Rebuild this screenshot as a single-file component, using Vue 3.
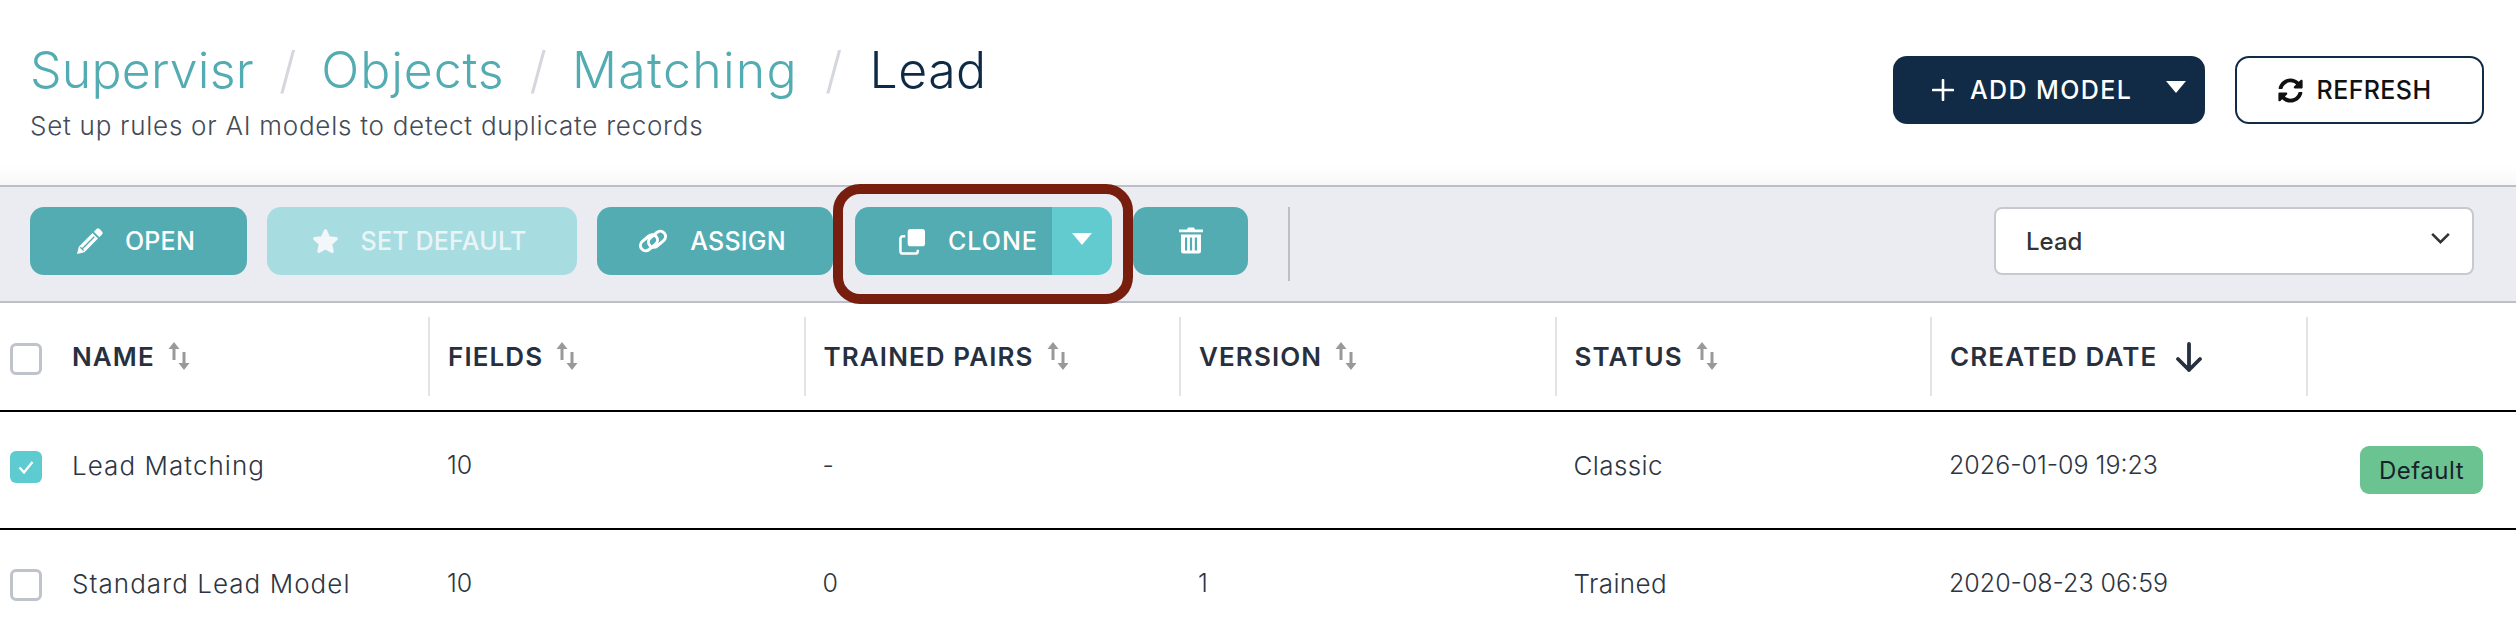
<script setup>
const columns = [
  { label: 'NAME', sort: true },
  { label: 'FIELDS', sort: true },
  { label: 'TRAINED PAIRS', sort: true },
  { label: 'VERSION', sort: true },
  { label: 'STATUS', sort: true },
  { label: 'CREATED DATE', sort: false },
  { label: '', sort: null }
]
const rows = [
  { checked: true, cells: ['Lead Matching', '10', '-', '', 'Classic', '2026-01-09 19:23'], badge: true },
  { checked: false, cells: ['Standard Lead Model', '10', '0', '1', 'Trained', '2020-08-23 06:59'], badge: false }
]
</script>

<template>
  <div class="page">
    <header class="head">
      <div class="titles">
        <div class="crumbs">
          <span class="link c1">Supervisr</span><span class="sep">/</span>
          <span class="link c2">Objects</span><span class="sep">/</span>
          <span class="link c3">Matching</span><span class="sep wide">/</span>
          <span class="cur">Lead</span>
        </div>
        <div class="sub">Set up rules or AI models to detect duplicate records</div>
      </div>
      <div class="head-actions">
        <button class="btn navy">
          <svg class="plus" viewBox="0 0 22 22"><path d="M11 1v20M1 11h20" stroke="#fff" stroke-width="2.6" stroke-linecap="round" fill="none"/></svg>
          <span>ADD MODEL</span>
          <span class="tri white-tri"></span>
        </button>
        <button class="btn outline">
          <svg class="ic-refresh" viewBox="0 0 512 512"><path fill="#111" d="M370.7 133.3C339.5 104 298.9 88 255.800 88c-77.500.1-144.300 53.200-162.800 126.900-1.300 5.400-6.100 9.200-11.700 9.200H24.100c-7.500 0-13.200-6.800-11.800-14.200C33.900 94.900 134.800 8 256 8c66.400 0 126.800 26.100 171.300 68.700L463 41c15.100-15.100 41-4.400 41 17V192c0 13.300-10.700 24-24 24H345.900c-21.400 0-32.100-25.900-17-41l41.800-41.700zM32 296h134.100c21.400 0 32.100 25.900 17 41l-41.800 41.800c31.300 29.300 71.900 45.300 115 45.200 77.400-.1 144.300-53.100 162.800-126.800 1.300-5.400 6.100-9.200 11.700-9.200h57.300c7.500 0 13.200 6.800 11.800 14.200C478.100 417.100 377.200 504 256 504c-66.400 0-126.800-26.100-171.300-68.700L49 471c-15.100 15.100-41 4.400-41-17V320c0-13.300 10.700-24 24-24z"/></svg>
          <span>REFRESH</span>
        </button>
      </div>
    </header>

    <div class="toolbar">
      <button class="btn teal w-open">
        <svg class="ic" viewBox="0 0 26 26">
          <path fill="#fff" d="M19.500 1.200a2.400 2.400 0 0 1 3.400 0l1.900 1.900a2.400 2.400 0 0 1 0 3.400L22.500 8.800 17.200 3.500z"/>
          <path fill="#fff" d="M15.900 4.800l5.300 5.300L8 23.300 1 25l1.700-7z"/>
          <path d="M6.300 19.700L17.600 8.400M4.200 18.600l3.200 3.200" stroke="#53acb2" stroke-width="1.300" fill="none"/>
        </svg>
        <span class="gap">OPEN</span>
      </button>
      <button class="btn teal faded w-default">
        <svg class="ic" viewBox="0 0 28 28"><path fill="#f4f7fa" d="M14 3l3.200 7.200 7.800.9-5.800 5.300 1.600 7.700-6.800-3.900-6.800 3.900 1.600-7.700L3 11.100l7.800-.9z" stroke="#f4f7fa" stroke-width="3.500" stroke-linejoin="round"/></svg>
        <span class="gap">SET DEFAULT</span>
      </button>
      <button class="btn teal w-assign">
        <svg class="ic-link" viewBox="0 0 30 24">
          <g fill="none" stroke="#fff" stroke-width="3">
            <rect x="1.500" y="8.500" width="19" height="10.500" rx="5.250" transform="rotate(-40 11 13.750)"/>
            <rect x="9.500" y="5" width="19" height="10.500" rx="5.250" transform="rotate(-40 19 10.250)"/>
          </g>
        </svg>
        <span class="gap">ASSIGN</span>
      </button>
      <div class="clone-wrap">
        <div class="clone-group">
          <button class="btn teal w-clone">
            <svg class="ic" viewBox="0 0 28 28"><rect x="9" y="1" width="18" height="18" rx="3" fill="#fff"/><path d="M6.500 8.500H4A2.500 2.500 0 0 0 1.500 11v13A2.500 2.500 0 0 0 4 26.500h13A2.500 2.500 0 0 0 19.500 24v-1.500" fill="none" stroke="#fff" stroke-width="2.600"/></svg>
            <span class="gap clone-text">CLONE</span>
          </button>
          <button class="caret"><span class="tri"></span></button>
        </div>
      </div>
      <button class="btn teal w-trash">
        <svg class="ic-trash" viewBox="0 0 24 28"><path fill="#fff" d="M0 3.500h8L9 1.500h6l1 2h8v2.800H0z"/><path fill="#fff" fill-rule="evenodd" d="M2 8.500h20V25a2.500 2.500 0 0 1-2.500 2.500h-15A2.500 2.500 0 0 1 2 25zM6 11.500v13h2.200v-13zM10.900 11.500v13h2.200v-13zM15.800 11.500v13H18v-13z"/></svg>
      </button>
      <div class="divider"></div>
      <div class="select">
        <span>Lead</span>
        <svg class="chev" viewBox="0 0 22 14"><path d="M2 2l9 9 9-9" fill="none" stroke="#333" stroke-width="2.800"/></svg>
      </div>
    </div>

    <div class="table">
      <div class="tr thead">
        <div v-for="(c, i) in columns" :key="i" class="th">
          <span v-if="i === 0" class="check"></span>
          <span v-if="c.label" class="th-label">{{ c.label }}</span>
          <svg v-if="c.sort === true" class="sort" viewBox="0 0 22 28"><g fill="#999"><path d="M6 0l5.500 7H7.500v11h-3V7H.5z"/><path d="M16 28l-5.500-7h4V10h3v11h4z"/></g></svg>
          <svg v-if="c.sort === false" class="arrow" viewBox="0 0 28 30"><path d="M14 2v26M3 17l11 11 11-11" fill="none" stroke="#27303f" stroke-width="3.800" stroke-linecap="round" stroke-linejoin="round"/></svg>
        </div>
      </div>
      <div v-for="(r, ri) in rows" :key="ri" class="tr tbody">
        <div v-for="(cell, i) in r.cells" :key="i" class="td" :class="'col' + i">
          <span v-if="i === 0" class="check" :class="{ on: r.checked }">
            <svg v-if="r.checked" viewBox="0 0 20 20"><path d="M3.500 10.500l4.500 5 8.500-10.500" fill="none" stroke="#fff" stroke-width="2.400"/></svg>
          </span>
          <span>{{ cell }}</span>
        </div>
        <div class="td last">
          <span v-if="r.badge" class="badge">Default</span>
        </div>
      </div>
    </div>
  </div>
</template>

<style>
html, body { margin: 0; background: #fff; overflow: hidden; }
</style>

<style scoped>
.page {
  width: 2516px;
  height: 624px;
  overflow: hidden;
  font-family: Inter, "Noto Sans", sans-serif;
  color: #27303f;
  background: #fff;
}
.head {
  height: 185px;
  box-sizing: border-box;
  display: flex;
  justify-content: space-between;
  padding: 40px 32px 0 30px;
  background: linear-gradient(#fff 165px, #f8f8f9 185px);
}
.crumbs {
  font-size: 50px;
  line-height: 60px;
  font-weight: 300;
  white-space: nowrap;
  display: flex;
}
.link { color: #53acb2; }
.c1 { letter-spacing: 0.2px; }
.c2 { letter-spacing: 0.9px; }
.c3 { letter-spacing: 1.3px; }
.cur { color: #0f2a45; font-weight: 300; letter-spacing: 0.5px; }
.sep { color: #d5d7de; margin: 0 25px; }
.sep.wide { margin: 0 27px; }
.sub {
  margin-top: 10px;
  font-size: 26px;
  line-height: 32px;
  font-weight: 300;
  color: #444b57;
  letter-spacing: 0.75px;
}
.head-actions { display: flex; gap: 30px; padding-top: 16px; }
button { font-family: inherit; border: 0; padding: 0; margin: 0; }
.btn {
  height: 68px;
  border-radius: 14px;
  display: flex;
  align-items: center;
  justify-content: center;
  font-size: 25px;
  font-weight: 500;
  letter-spacing: 0.2px;
  white-space: nowrap;
  box-sizing: border-box;
}
.navy {
  width: 312px;
  justify-content: flex-start;
  padding-left: 39px;
  background: #112b47;
  color: #fff;
  letter-spacing: 1.4px;
}
.plus { width: 22px; height: 22px; margin-right: 16px; flex: none; }
.navy .tri { margin-left: 34px; margin-bottom: 6px; }
.outline {
  width: 249px;
  padding-right: 10px;
  background: #fff;
  color: #111;
  border: 2px solid #112b47;
  letter-spacing: 0.4px;
}
.ic-refresh { width: 25px; height: 25px; margin-right: 14px; }
.toolbar {
  height: 118px;
  box-sizing: border-box;
  border-top: 2px solid #bcbfc8;
  border-bottom: 2px solid #bcbfc8;
  background: #ebecf2;
  display: flex;
  align-items: flex-start;
  padding: 20px 42px 0 30px;
}
.teal { background: #53acb2; color: #fff; }
.faded { background: #a7dde1; color: #eaf4f6; }
.w-open { width: 217px; margin-right: 20px; padding-right: 6px; }
.w-default { width: 310px; margin-right: 20px; padding-right: 6px; }
.w-assign { width: 236px; padding-right: 6px; }
.ic { width: 27px; height: 27px; flex: none; }
.ic-link { width: 30px; height: 24px; flex: none; }
.gap { margin-left: 22px; }
.clone-text { letter-spacing: 1px; }
.clone-wrap {
  width: 300px;
  height: 120px;
  box-sizing: border-box;
  margin: -23px 0 0 0;
  border: 10px solid #781e0f;
  border-radius: 27px;
  padding: 13px 0 0 12px;
  position: relative;
  z-index: 1;
}
.clone-group { display: flex; }
.w-clone {
  width: 197px;
  justify-content: flex-start;
  padding-left: 44px;
  border-radius: 14px 0 0 14px;
}
.caret {
  width: 60px;
  height: 68px;
  background: #62cbd0;
  border-radius: 0 14px 14px 0;
  display: flex;
  align-items: center;
  justify-content: center;
}
.caret .tri { margin-bottom: 4px; }
.tri {
  display: inline-block;
  width: 0;
  height: 0;
  border-left: 10px solid transparent;
  border-right: 10px solid transparent;
  border-top: 12px solid #fff;
}
.w-trash { width: 115px; }
.ic-trash { width: 24px; height: 28px; margin-bottom: 2px; }
.divider { width: 2px; height: 74px; margin-left: 40px; background: #bcbfc8; }
.select {
  width: 480px;
  height: 68px;
  margin-left: auto;
  box-sizing: border-box;
  border: 2px solid #c8c9ce;
  border-radius: 8px;
  background: #fff;
  display: flex;
  align-items: center;
  justify-content: space-between;
  padding: 0 21px 0 30px;
  font-size: 24px;
  font-weight: 500;
  color: #333;
}
.chev { width: 21px; height: 13px; margin-bottom: 6px; }
.tr {
  display: grid;
  grid-template-columns: 428px repeat(5, 375.5px) 1fr;
  border-bottom: 2px solid #000;
  box-sizing: border-box;
}
.thead { height: 109px; padding-top: 14px; align-items: start; }
.tbody { height: 118px; }
.th {
  height: 79px;
  box-sizing: border-box;
  display: flex;
  align-items: center;
  padding-left: 18px;
  border-left: 2px solid #e3e4e8;
  font-size: 26px;
  font-weight: 600;
  letter-spacing: 1.1px;
  color: #27303f;
  white-space: nowrap;
}
.th:first-child { border-left: 0; padding-left: 10px; }
.th-label { margin-right: 13px; }
.check {
  width: 32px;
  height: 32px;
  flex: none;
  box-sizing: border-box;
  border: 3px solid #bfc3ca;
  border-radius: 6px;
  margin: 4px 30px 0 0;
  display: inline-flex;
}
.check.on { background: #5dcbd0; border: 0; padding: 6px; }
.check svg { width: 20px; height: 20px; }
.sort { width: 22px; height: 28px; margin-bottom: 2px; }
.arrow { width: 28px; height: 30px; margin-left: 5px; }
.td {
  display: flex;
  align-items: center;
  padding: 0 0 10px 19px;
  font-size: 25px;
  font-weight: 300;
  color: #2d3542;
  white-space: nowrap;
}
.td.col0 { padding-left: 10px; font-size: 26px; letter-spacing: 1.05px; }
.td.col4 { font-size: 26px; letter-spacing: 0.4px; }
.td.last { justify-content: flex-end; padding: 0 33px 0 0; }
.badge {
  width: 123px;
  height: 48px;
  border-radius: 9px;
  background: #6bc391;
  color: #18222b;
  font-size: 24px;
  font-weight: 400;
  letter-spacing: 0.5px;
  display: flex;
  align-items: center;
  justify-content: center;
}
</style>
